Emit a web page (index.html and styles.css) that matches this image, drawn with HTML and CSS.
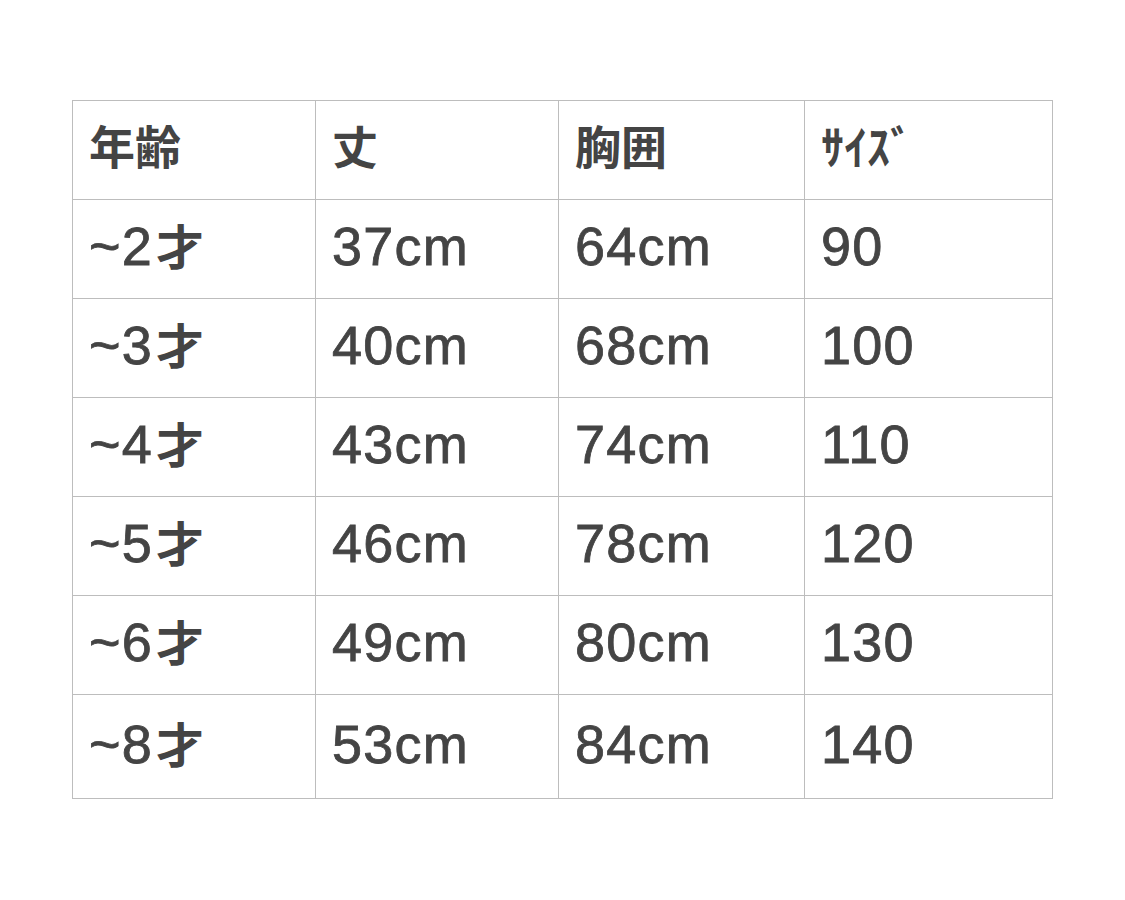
FILE: index.html
```html
<!DOCTYPE html>
<html lang="ja">
<head>
<meta charset="utf-8">
<link rel="stylesheet" href="styles.css">
</head>
<body>
<table class="size-table">
  <colgroup>
    <col class="c1"><col class="c2"><col class="c3"><col class="c4">
  </colgroup>
  <thead>
    <tr class="row"><th>年齢</th><th>丈</th><th>胸囲</th><th>ｻｲｽﾞ</th></tr>
  </thead>
  <tbody>
    <tr class="row"><td>~2<span class="kj">才</span></td><td>37cm</td><td>64cm</td><td>90</td></tr>
    <tr class="row"><td>~3<span class="kj">才</span></td><td>40cm</td><td>68cm</td><td>100</td></tr>
    <tr class="row"><td>~4<span class="kj">才</span></td><td>43cm</td><td>74cm</td><td>110</td></tr>
    <tr class="row"><td>~5<span class="kj">才</span></td><td>46cm</td><td>78cm</td><td>120</td></tr>
    <tr class="row"><td>~6<span class="kj">才</span></td><td>49cm</td><td>80cm</td><td>130</td></tr>
    <tr class="row last"><td>~8<span class="kj">才</span></td><td>53cm</td><td>84cm</td><td>140</td></tr>
  </tbody>
</table>
</body>
</html>
```

FILE: styles.css
```css
html, body {
  margin: 0;
  padding: 0;
  background: #ffffff;
}
body {
  padding: 100px 0 0 72px;
  font-family: "Liberation Sans", "Noto Sans CJK JP", sans-serif;
  color: #444444;
}
.size-table {
  border-collapse: collapse;
  table-layout: fixed;
  width: 980px;
}
.c1 { width: 243px; }
.c2 { width: 243px; }
.c3 { width: 246px; }
.c4 { width: 248px; }
.size-table th,
.size-table td {
  border: 1px solid #bdbdbd;
  padding: 0 0 0 16px;
  text-align: left;
  vertical-align: middle;
  white-space: nowrap;
}
.row { height: 99px; }
.row.last { height: 104px; }
.size-table th {
  font-family: "Noto Sans CJK JP", sans-serif;
  font-weight: 700;
  font-size: 46px;
  line-height: 1;
  padding-bottom: 12px;
}
.size-table td {
  font-size: 54px;
  line-height: 1;
  letter-spacing: 1.2px;
  padding-bottom: 6px;
  -webkit-text-stroke: 0.8px #444444;
}
.kj {
  font-family: "Noto Sans CJK JP", sans-serif;
  font-weight: 700;
  font-size: 48px;
  letter-spacing: 0;
  margin-left: 3px;
  -webkit-text-stroke: 0;
}
```
